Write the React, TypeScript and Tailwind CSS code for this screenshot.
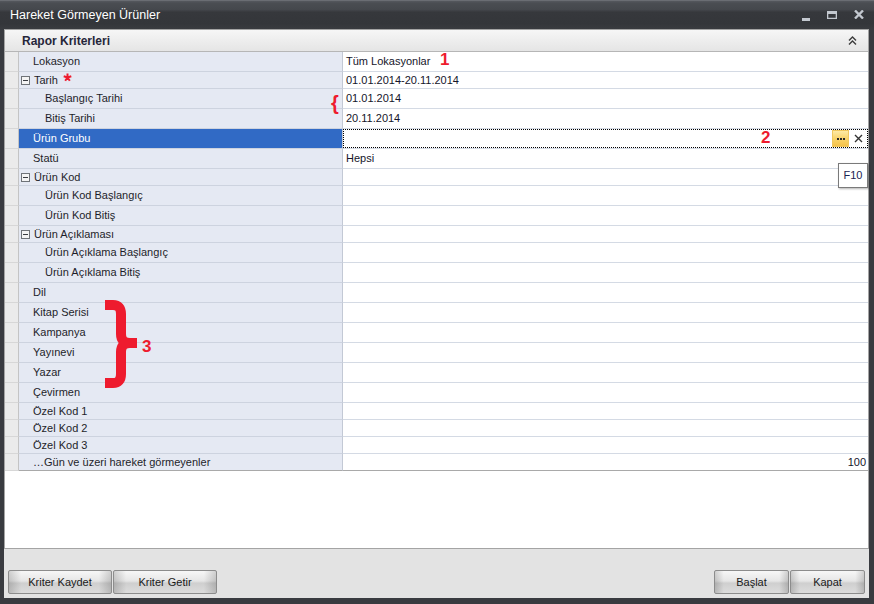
import React from 'react';

type Row = {
  label: string;
  value?: string;
  sub?: boolean;
  exp?: boolean;
  star?: boolean;
  selected?: boolean;
  short?: boolean;
  right?: boolean;
};

const rows: Row[] = [
  { label: 'Lokasyon', value: 'Tüm Lokasyonlar' },
  { label: 'Tarih', exp: true, star: true, value: '01.01.2014-20.11.2014' },
  { label: 'Başlangıç Tarihi', sub: true, value: '01.01.2014' },
  { label: 'Bitiş Tarihi', sub: true, value: '20.11.2014' },
  { label: 'Ürün Grubu', selected: true },
  { label: 'Statü', value: 'Hepsi' },
  { label: 'Ürün Kod', exp: true },
  { label: 'Ürün Kod Başlangıç', sub: true },
  { label: 'Ürün Kod Bitiş', sub: true },
  { label: 'Ürün Açıklaması', exp: true },
  { label: 'Ürün Açıklama Başlangıç', sub: true },
  { label: 'Ürün Açıklama Bitiş', sub: true },
  { label: 'Dil' },
  { label: 'Kitap Serisi' },
  { label: 'Kampanya' },
  { label: 'Yayınevi' },
  { label: 'Yazar' },
  { label: 'Çevirmen' },
  { label: 'Özel Kod 1', short: true },
  { label: 'Özel Kod 2', short: true },
  { label: 'Özel Kod 3', short: true },
  { label: '…Gün ve üzeri hareket görmeyenler', short: true, value: '100', right: true },
];

function Expander() {
  return (
    <svg width="9" height="9" viewBox="0 0 9 9" className="mr-[4px] shrink-0">
      <rect x="0.5" y="0.5" width="8" height="8" fill="#f4f4f4" stroke="#6f7378" />
      <rect x="2" y="4" width="5" height="1" fill="#3a3d42" />
    </svg>
  );
}

// red required-field mark
function Star() {
  return (
    <svg width="9" height="9" viewBox="0 0 9 9" className="ml-[5px] self-start mt-[1px]">
      <path
        d="M4.5 0.5 V4.5 M4.5 4.5 L0.7 3.3 M4.5 4.5 L8.3 3.3 M4.5 4.5 L2.2 7.8 M4.5 4.5 L6.8 7.8"
        stroke="#ee1b2e"
        strokeWidth="2"
        strokeLinecap="butt"
      />
    </svg>
  );
}

function GridRow({ row, last }: { row: Row; last: boolean }) {
  const h = row.exp || row.short ? 'h-[17px]' : 'h-[20px]';
  const lineL = last ? 'border-[#a9a9a9]' : 'border-[#cdd3df]';
  const lineV = last ? 'border-[#a9a9a9]' : 'border-[#d4dae4]';
  return (
    <div className={`flex ${h} text-[11px] leading-none`}>
      <div className={`w-[14px] shrink-0 bg-[#ebebeb] border-b border-r border-b-[#d7d7d7] border-r-[#c4c4c4] ${last ? 'border-b-[#a9a9a9]' : ''}`} />
      <div
        className={`w-[324px] shrink-0 flex items-center border-b border-r border-r-[#c3c9d5] ${lineL} ${
          row.selected ? 'bg-[#316ac5] text-white' : 'bg-[#e5e9f3] text-[#1e1e2a]'
        } ${row.exp ? 'pl-[2px]' : row.sub ? 'pl-[26px]' : 'pl-[14px]'}`}
      >
        {row.exp && <Expander />}
        <span>{row.label}</span>
        {row.star && <Star />}
      </div>
      {row.selected ? (
        <div className={`flex-1 flex items-center justify-end border-b ${lineV} bg-white`}>
          <div className="h-full w-full border border-dotted border-black flex items-center justify-end pr-[4px]">
            <div className="w-[17px] h-[17px] mr-[5px] flex items-center justify-center gap-[1px] bg-[linear-gradient(#fdeaa6,#f9d46c_50%,#f5c24a)] border border-[#f0c860]">
              <span className="w-[2px] h-[2px] bg-[#2a2a2a]" />
              <span className="w-[2px] h-[2px] bg-[#2a2a2a]" />
              <span className="w-[2px] h-[2px] bg-[#2a2a2a]" />
            </div>
            <svg width="9" height="9" viewBox="0 0 9 9">
              <path d="M1 1 L8 8 M8 1 L1 8" stroke="#333" strokeWidth="1.4" />
            </svg>
          </div>
        </div>
      ) : (
        <div
          className={`flex-1 flex items-center border-b ${lineV} bg-white text-[#15152a] ${
            row.right ? 'justify-end pr-[2px]' : 'pl-[3px]'
          }`}
        >
          {row.value}
        </div>
      )}
    </div>
  );
}

function WinButton({ children, w }: { children: React.ReactNode; w: string }) {
  return (
    <button
      className={`${w} h-[24px] rounded-[2px] border border-[#8c8c8c] text-[11px] text-[#1a1a1a] bg-[linear-gradient(to_right,rgba(0,0,0,0.16),rgba(0,0,0,0)_12%,rgba(0,0,0,0)_88%,rgba(0,0,0,0.16)),linear-gradient(#f7f7f7,#e6e6e6_45%,#cfcfcf_55%,#dcdcdc)]`}
    >
      {children}
    </button>
  );
}

export default function App() {
  return (
    <div className="relative w-[874px] h-[604px] overflow-hidden bg-[#393b40] flex flex-col font-['Liberation_Sans',Arial,sans-serif]">
      <div className="h-[29px] shrink-0 flex items-center justify-between bg-[linear-gradient(#55585e,#4a4d52_8%,#45484d_30%,#36383c_40%,#34363a_80%,#393b3f)] border-t border-[#6a6d73]">
        <span className="pl-[10px] text-white text-[12.5px] leading-none mt-[1px]">Hareket Görmeyen Ürünler</span>
        <div className="flex items-center pr-[10px] gap-[16px]">
          <svg width="9" height="9" viewBox="0 0 9 9" className="mt-[4px]">
            <rect x="0" y="5" width="8" height="3" fill="#c3c8cf" />
          </svg>
          <svg width="11" height="9" viewBox="0 0 11 9" className="mt-[1px]">
            <path d="M0 0 H10 V8 H0 Z M1.3 3 V6.8 H8.7 V3 Z" fill="#c3c8cf" fillRule="evenodd" />
          </svg>
          <svg width="10" height="9" viewBox="0 0 10 9" className="mt-[-1px]">
            <path d="M1 0.5 L9 8.5 M9 0.5 L1 8.5" stroke="#c3c8cf" strokeWidth="2.4" />
          </svg>
        </div>
      </div>

      <div className="flex-1 flex flex-col pl-[4px] pr-[5px] pb-[6px]">
        <div className="h-[520px] shrink-0 border border-[#a4a4a4] bg-white flex flex-col">
          <div className="h-[22px] shrink-0 flex items-center justify-between border-b border-[#b6b6b6] bg-[linear-gradient(#f6f6f6,#e5e5e5)] pl-[17px] pr-[11px]">
            <span className="text-[12px] font-bold text-[#26263a] leading-none">Rapor Kriterleri</span>
            <svg width="9" height="9" viewBox="0 0 9 9">
              <path d="M1 4.5 L4.5 1 L8 4.5 M1 8.5 L4.5 5 L8 8.5" stroke="#3c3c3c" strokeWidth="1.4" fill="none" />
            </svg>
          </div>
          {rows.map((r, i) => (
            <GridRow key={r.label} row={r} last={i === rows.length - 1} />
          ))}
        </div>
        <div className="flex-1 bg-[#e3e3e3] flex items-end justify-between pl-[4px] pr-[4px] pb-[4px]">
          <div className="flex gap-[1px]">
            <WinButton w="w-[104px]">Kriter Kaydet</WinButton>
            <WinButton w="w-[104px]">Kriter Getir</WinButton>
          </div>
          <div className="flex gap-[1px]">
            <WinButton w="w-[75px]">Başlat</WinButton>
            <WinButton w="w-[75px]">Kapat</WinButton>
          </div>
        </div>
      </div>

      {/* annotations */}
      <span className="absolute left-[440px] top-[51px] text-[#ee1b2e] font-bold text-[17px] leading-none">1</span>
      <span className="absolute left-[331px] top-[93px] text-[#ee1b2e] font-bold text-[20px] leading-none">{'{'}</span>
      <span className="absolute left-[761px] top-[129px] text-[#ee1b2e] font-bold text-[17px] leading-none">2</span>
      <svg className="absolute left-[100px] top-[296px]" width="42" height="96" viewBox="0 0 42 96">
        <path
          d="M5 9 H13 Q21 9 21 18 V38 Q21 47 30 47 H37 M37 47 H30 Q21 47 21 56 V78 Q21 87 13 87 H5"
          stroke="#ee1b2e"
          strokeWidth="10"
          fill="none"
        />
      </svg>
      <span className="absolute left-[142px] top-[338px] text-[#ee1b2e] font-bold text-[17px] leading-none">3</span>

      {/* F10 tooltip */}
      <div className="absolute left-[838px] top-[163px] w-[30px] h-[25px] bg-white border border-[#7a7a7a] shadow-[1px_1px_2px_rgba(0,0,0,0.3)] flex items-center justify-center text-[11px] text-[#1c2452]">
        F10
      </div>
    </div>
  );
}
